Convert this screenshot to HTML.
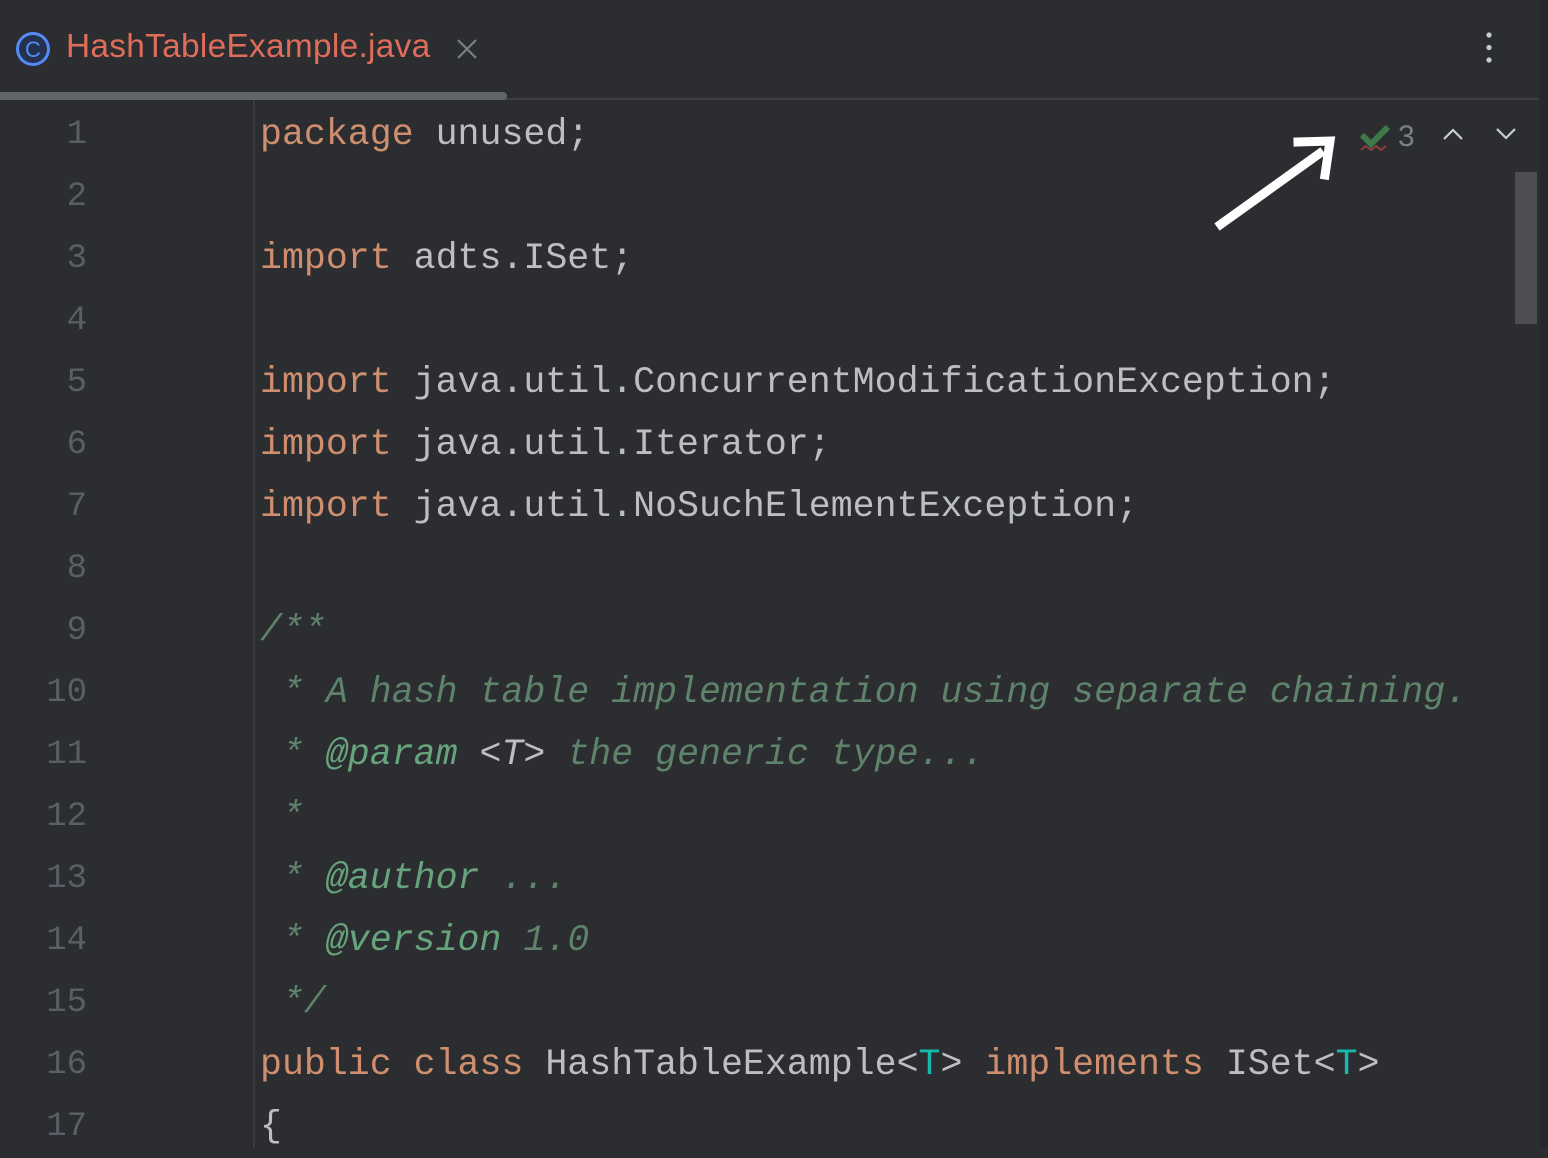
<!DOCTYPE html>
<html><head><style>
body{margin:0;width:1548px;height:1148px;background:#2b2d30;overflow:hidden;position:relative;font-family:"Liberation Mono",monospace;}
.tabtitle{position:absolute;left:66px;top:28px;font:33.4px "Liberation Sans",sans-serif;color:#e06c5a;letter-spacing:0.3px}
.ln{position:absolute;left:0;width:87px;text-align:right;font-size:34px;color:#5a5e66;line-height:62px}
.code{position:absolute;left:260px;font-size:36.6px;line-height:62px;color:#bcbec4;white-space:pre}
.k{color:#cf8e6d}.c{color:#5f826b;font-style:italic}.t{color:#67a37c;font-style:italic}.p{color:#16baac}.g{color:#bcbec4}
</style></head><body>
<svg style="position:absolute;left:15px;top:31px" width="36" height="36"><circle cx="18" cy="18" r="15.5" fill="#25324d" stroke="#548af7" stroke-width="3"/><text x="18" y="26" font-family="Liberation Sans" font-size="22" fill="#548af7" text-anchor="middle">C</text></svg>
<div class="tabtitle">HashTableExample.java</div>
<svg style="position:absolute;left:456px;top:38px" width="22" height="22"><path d="M2 2L20 20M20 2L2 20" stroke="#7a7e85" stroke-width="2.2"/></svg>
<svg style="position:absolute;left:1482px;top:30px" width="14" height="36"><circle cx="7" cy="5" r="2.6" fill="#c9ccd2"/><circle cx="7" cy="17.5" r="2.6" fill="#c9ccd2"/><circle cx="7" cy="30" r="2.6" fill="#c9ccd2"/></svg>
<div style="position:absolute;left:0;top:98px;width:1538px;height:2px;background:#3d3f43"></div>
<div style="position:absolute;left:0;top:92px;width:507px;height:8px;background:#62656b;border-radius:0 4px 4px 0"></div>
<div style="position:absolute;left:253px;top:100px;width:2px;height:1048px;background:#393b40"></div>
<div style="position:absolute;left:1540px;top:0;width:8px;height:1148px;background:#27282b"></div>
<div style="position:absolute;left:1515px;top:172px;width:22px;height:152px;background:#4d4e51"></div>
<svg style="position:absolute;left:1205px;top:115px" width="340" height="125">
<path d="M12 112L118 36" stroke="#fff" stroke-width="9"/>
<path d="M93 27L125 26L120 60" fill="none" stroke="#fff" stroke-width="9" stroke-linecap="square"/>
<path d="M157 20l9 9l17-17" fill="none" stroke="#3d7a48" stroke-width="6"/>
<path d="M156 35l5-4l5 4l5-4l5 4l5-4" fill="none" stroke="#8f3d3d" stroke-width="2"/>
<text x="193" y="31" font-family="Liberation Sans" font-size="30" fill="#7c7f85">3</text>
<path d="M239 24l9-9l9 9" fill="none" stroke="#c9ccd2" stroke-width="2.2"/>
<path d="M292 14l9 9l9-9" fill="none" stroke="#c9ccd2" stroke-width="2.2"/>
</svg>
<div class="ln" style="top:104px">1<br>2<br>3<br>4<br>5<br>6<br>7<br>8<br>9<br>10<br>11<br>12<br>13<br>14<br>15<br>16<br>17</div>
<div class="code" style="top:104px"><span class="k">package</span> unused;

<span class="k">import</span> adts.ISet;

<span class="k">import</span> java.util.ConcurrentModificationException;
<span class="k">import</span> java.util.Iterator;
<span class="k">import</span> java.util.NoSuchElementException;

<span class="c">/**</span>
<span class="c"> * A hash table implementation using separate chaining.</span>
<span class="c"> * <span class="t">@param</span> <span class="g">&lt;T&gt;</span> the generic type...</span>
<span class="c"> *</span>
<span class="c"> * <span class="t">@author</span> ...</span>
<span class="c"> * <span class="t">@version</span> 1.0</span>
<span class="c"> */</span>
<span class="k">public class</span> HashTableExample&lt;<span class="p">T</span>&gt; <span class="k">implements</span> ISet&lt;<span class="p">T</span>&gt;
{</div>
</body></html>
